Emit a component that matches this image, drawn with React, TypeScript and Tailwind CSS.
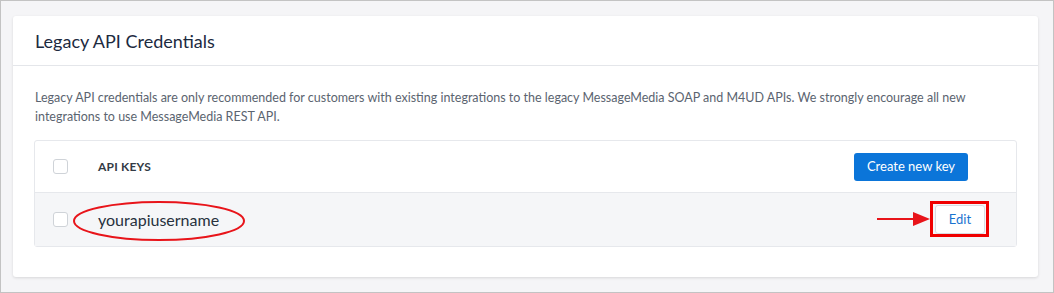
import React from "react";

export default function App() {
  return (
    <div
      className="w-[1054px] h-[293px] bg-[#f5f5f7] border border-[#c3c3c3] pt-[15px] pl-[12px] pr-[14px]"
      style={{ fontFamily: "Lato, 'Open Sans', sans-serif" }}
    >
      <div className="w-[1025px] h-[261px] bg-white rounded-[3px] shadow-[0_1px_3px_rgba(0,0,0,0.12)] flex flex-col">
        <div className="h-[50px] border-b border-[#e4e6ea] px-[22px] flex items-center">
          <h1 className="text-[18px] text-[#1c2a3f] leading-none">Legacy API Credentials</h1>
        </div>
        <div className="px-[21px] pt-[22px]">
          <p className="text-[12.5px] leading-[19px] text-[#5b6470] pl-[1px]">
            Legacy API credentials are only recommended for customers with existing integrations to the legacy MessageMedia SOAP and M4UD APIs. We strongly encourage all new integrations to use MessageMedia REST API.
          </p>
          <div className="mt-[14px] border border-[#e6e8ec] rounded-[3px] w-[983px]">
            <div className="h-[52px] flex items-center pl-[18px] pr-[48px] border-b border-[#e6e8ec]">
              <div className="w-[15px] h-[15px] border border-[#cfd3d8] rounded-[3px] bg-white" />
              <div className="ml-[30px] text-[12px] font-bold text-[#333b45] tracking-[0.2px]">API KEYS</div>
              <div className="flex-1" />
              <button className="w-[114px] h-[28px] bg-[#0b75d9] rounded-[3px] text-white text-[13px] leading-none">
                Create new key
              </button>
            </div>
            <div className="relative h-[53px] bg-[#f5f6f8] flex items-center pl-[18px] pr-[31px]">
              <div className="w-[15px] h-[15px] border border-[#cfd3d8] rounded-[3px] bg-white" />
              <div className="ml-[30px] text-[16px] text-[#27313d]">yourapiusername</div>
              <div className="flex-1" />
              <button className="w-[50px] h-[29px] bg-white border border-[#d9dce1] rounded-[3px] text-[#1a73d0] text-[13px] leading-none">
                Edit
              </button>
              <svg
                className="absolute left-[38px] top-[8px]"
                width="174"
                height="42"
                viewBox="0 0 174 42"
              >
                <ellipse cx="86" cy="20" rx="85" ry="19" fill="none" stroke="#e8141a" strokeWidth="2" />
              </svg>
              <div className="absolute left-[895px] top-[8px] w-[59px] h-[36px] border-[3px] border-[#f00000]" />
              <svg
                className="absolute left-[841px] top-[18px]"
                width="56"
                height="16"
                viewBox="0 0 56 16"
              >
                <line x1="1" y1="8" x2="40" y2="8" stroke="#e8141a" strokeWidth="2" />
                <polygon points="37,1 54,8 37,15" fill="#e8141a" />
              </svg>
            </div>
          </div>
        </div>
      </div>
    </div>
  );
}
